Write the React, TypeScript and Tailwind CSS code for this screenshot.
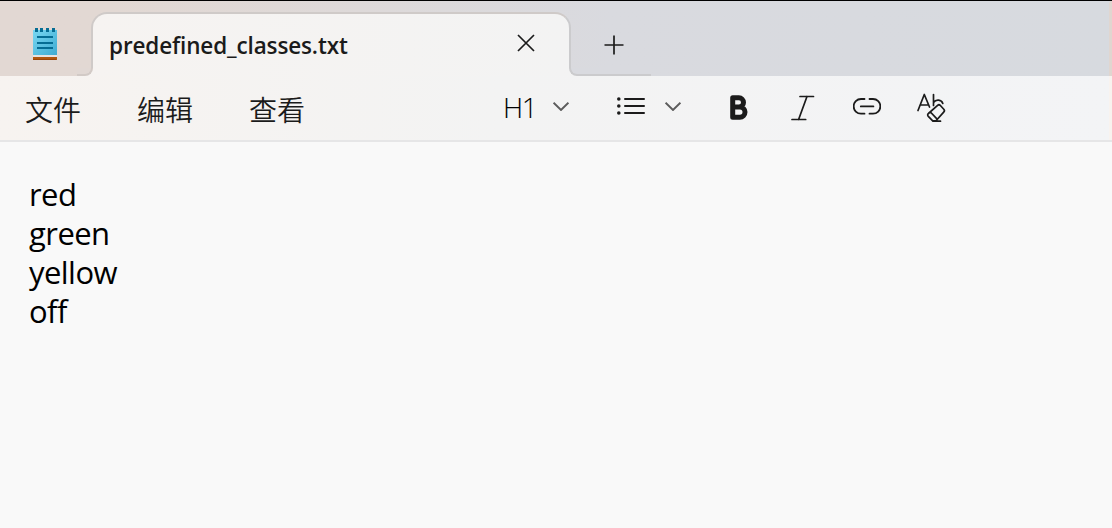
import type { ReactNode } from "react";

const menus = ["文件", "编辑", "查看"];
const lines = ["red", "green", "yellow", "off"];

function NotepadIcon() {
  return (
    <svg width="24" height="33" viewBox="0 0 24 33" className="shrink-0">
      <defs>
        <linearGradient id="pad" x1="0" y1="0" x2="1" y2="1">
          <stop offset="0" stopColor="#78d8f2" />
          <stop offset="1" stopColor="#3fabd2" />
        </linearGradient>
      </defs>
      <rect y="27" width="24" height="2" fill="#e6e3e2" />
      <rect y="29" width="24" height="3" fill="#b0560f" />
      <rect y="31" width="23" height="1" fill="#9a4508" />
      <rect y="2" width="24" height="25" fill="url(#pad)" />
      <path d="M4 9h16M4 15h16M4 20h16" stroke="#056d94" strokeWidth="2" />
      <path d="M3.5 0v4M8.5 0v4M14.5 0v4M20.5 0v4" stroke="#056d94" strokeWidth="3" />
    </svg>
  );
}

function Chevron() {
  return (
    <svg width="16" height="9" viewBox="0 0 16 9" fill="none" stroke="#5c5c5c" strokeWidth="1.9">
      <path d="M.6.7 8 8 15.4.7" />
    </svg>
  );
}

function ListIcon() {
  return (
    <svg width="28" height="18" viewBox="0 0 28 18" fill="#1b1b1b">
      <circle cx="1.8" cy="2" r="1.8" />
      <circle cx="1.8" cy="9" r="1.8" />
      <circle cx="1.8" cy="16" r="1.8" />
      <path d="M8 2h19M8 9h19M8 16h19" stroke="#1b1b1b" strokeWidth="2" strokeLinecap="round" />
    </svg>
  );
}

function BoldIcon() {
  return (
    <svg width="18" height="25" viewBox="0 0 18 25" fill="none" stroke="#1b1b1b" strokeWidth="5" strokeLinejoin="round">
      <path d="M2.7 2.8h6.2a4.3 4.3 0 0 1 0 9.2H2.7zM2.7 12h7.2a5 5 0 0 1 0 10.2H2.7z" />
    </svg>
  );
}

function ItalicIcon() {
  return (
    <svg width="24" height="26" viewBox="0 0 24 26" fill="none" stroke="#1b1b1b" strokeWidth="1.7" strokeLinecap="round">
      <path d="M9 1.5h13.5M1 24.5h13.7M16 1.5 7.6 24.5" />
    </svg>
  );
}

function LinkIcon() {
  return (
    <svg width="28" height="17" viewBox="0 0 28 17" fill="none" stroke="#1b1b1b" strokeWidth="1.8" strokeLinecap="round">
      <path d="M11.5 1H8a7.3 7.3 0 0 0 0 14.7h3.5M16.5 1H20a7.3 7.3 0 0 1 0 14.7h-3.5M7.8 8.4h12.6" />
    </svg>
  );
}

function ClearFormatIcon() {
  return (
    <svg width="30" height="30" viewBox="0 0 30 30" fill="none" stroke="#1b1b1b" strokeWidth="1.7" strokeLinecap="round" strokeLinejoin="round">
      <path d="M1 17.5 7.3 1.5 12.5 14M3.2 12h8" />
      <path d="M16.5 1.5v11M16.5 9.5c2.5-3.5 8-3 9.3 1" />
      <path d="m11.4 20.5 9.2-8.1a2 2 0 0 1 2.8.1l3.4 3.8a2 2 0 0 1-.1 2.8l-7.7 8.7h-3.3l-4.4-4.5a1.8 1.8 0 0 1 .1-2.8zM13.4 19l6.5 6.8M16 28.2h7.5" />
    </svg>
  );
}

function Tool({ className, children }: { className: string; children: ReactNode }) {
  return <button className={`${className} shrink-0`}>{children}</button>;
}

export default function App() {
  return (
    <div className="flex h-[528px] w-[1112px] flex-col overflow-hidden bg-[#f9f9f9] text-[#1b1b1b]">
      <header className="flex h-[76px] shrink-0 items-start border-t border-black bg-linear-to-r from-[#e2d8d3] from-10% via-[#d9dadf] via-55% to-[#d7dadf]">
        <div className="w-[91px] shrink-0 pt-[27px] pl-[33px]">
          <NotepadIcon />
        </div>

        <div className="relative mt-[11px] flex h-16 w-[480px] shrink-0 items-start rounded-t-[16px] border-x-2 border-t-2 border-[#cfcac8] border-r-[#cbcbcd] bg-linear-to-r from-[#f6f3f1] to-[#f3f3f3] pl-4">
          {/* flared feet joining the tab to the toolbar */}
          <div className="absolute bottom-0 -left-4 h-2 w-4 bg-[#f6f3f1]">
            <div className="h-2 w-4 rounded-br-lg border-r-2 border-b-2 border-[#d2cac6] bg-[#e1d8d4]" />
          </div>
          <div className="absolute -right-[82px] bottom-0 h-2 w-[82px] bg-[#f3f3f3]">
            <div className="h-2 w-[82px] rounded-bl-lg border-b-2 border-l-2 border-[#cbcbcd] bg-[#d9dadf]" />
          </div>
          <span className="mt-[16px] w-[408px] shrink-0 text-[22.5px] leading-8 font-semibold tracking-[-0.13px] whitespace-nowrap" style={{ fontFamily: "'Open Sans', sans-serif" }}>
            predefined_classes.txt
          </span>
          <svg width="18" height="18" viewBox="0 0 18 18" stroke="#1b1b1b" strokeWidth="1.7" className="mt-[20px] shrink-0">
            <path d="m1 1 16 16M17 1 1 17" />
          </svg>
        </div>

        <svg width="20" height="20" viewBox="0 0 20 20" stroke="#1b1b1b" strokeWidth="1.7" className="mt-[34px] ml-[33px] shrink-0">
          <path d="M10 .5v19M.5 10h19" />
        </svg>
        <div className="ml-auto h-[75px] w-[3px] shrink-0 rounded-tl-[3px] bg-[#e0d6d0]" />
      </header>

      <nav className="flex h-[66px] shrink-0 items-start border-b-2 border-[#e6e6e7] bg-linear-to-r from-[#f7f3f0] via-[#f3f3f3] via-45% to-[#f3f4f6]">
        <div className="flex w-[504px] shrink-0 gap-14 pt-[13px] pl-[25px] text-[28px] leading-10" style={{ fontFamily: "'Noto Sans CJK SC', sans-serif", fontWeight: 350 }}>
          {menus.map((menu) => (
            <span key={menu} className="w-14 whitespace-nowrap">
              {menu}
            </span>
          ))}
        </div>
        <span className="mt-[11px] ml-[-1px] w-[49px] shrink-0 text-[28px] leading-10 font-light tracking-[-1.4px] whitespace-nowrap text-black" style={{ fontFamily: "'Open Sans', sans-serif" }}>
          H1
        </span>
        <Tool className="mt-[26px] ml-[1px]"><Chevron /></Tool>
        <Tool className="mt-[21px] ml-[48px]"><ListIcon /></Tool>
        <Tool className="mt-[26px] ml-[20px]"><Chevron /></Tool>
        <Tool className="mt-[19px] ml-[49px]"><BoldIcon /></Tool>
        <Tool className="mt-[19px] ml-[43px]"><ItalicIcon /></Tool>
        <Tool className="mt-[22px] ml-[38px]"><LinkIcon /></Tool>
        <Tool className="mt-[17px] ml-[36px]"><ClearFormatIcon /></Tool>
        <div className="ml-auto h-16 w-[3px] shrink-0 bg-[#f8f3ef]" />
      </nav>

      <main className="flex-1 pt-[32.5px] pl-[29px] text-[31px] leading-[39px] tracking-[-0.55px] text-black" style={{ fontFamily: "'Open Sans', sans-serif" }}>
        {lines.map((line) => (
          <p key={line}>{line}</p>
        ))}
      </main>
    </div>
  );
}
